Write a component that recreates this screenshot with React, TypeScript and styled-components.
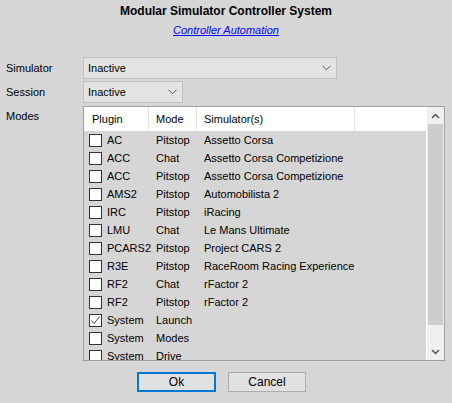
import React from "react";
import styled, { createGlobalStyle } from "styled-components";

const Global = createGlobalStyle`
  html, body { margin: 0; padding: 0; background: #d6d6d6; }
  body { font-family: "Liberation Sans", Arial, sans-serif; font-size: 11px; color: #000; }
`;

const Window = styled.div`
  width: 452px;
  height: 403px;
  box-sizing: border-box;
  padding-top: 4px;
  display: flex;
  flex-direction: column;
  overflow: hidden;
`;

const Title = styled.div`
  text-align: center;
  font-weight: bold;
  font-size: 12px;
  line-height: 14px;
`;

const LinkRow = styled.div`
  text-align: center;
  margin-top: 5px;
  line-height: 14px;
`;

const Link = styled.a`
  color: #0000ff;
  font-style: italic;
  text-decoration: underline;
  cursor: pointer;
`;

const Form = styled.div`
  display: grid;
  grid-template-columns: 77px 1fr;
  row-gap: 2px;
  padding-left: 6px;
  margin-top: 20px;
`;

const Label = styled.div<{ $top?: number }>`
  line-height: 22px;
  padding-top: ${(p) => p.$top ?? 0}px;
`;

const Select = styled.div<{ $width: number }>`
  width: ${(p) => p.$width}px;
  height: 22px;
  box-sizing: border-box;
  border: 1px solid #c2c2c2;
  background: #e4e4e4;
  display: flex;
  align-items: center;
  justify-content: space-between;
  padding: 0 5px 0 4px;
`;

const Chevron = () => (
  <svg width="9" height="6" viewBox="0 0 9 6">
    <path d="M0.5 0.8 L4.5 4.8 L8.5 0.8" fill="none" stroke="#555" strokeWidth="1" />
  </svg>
);

const ListBox = styled.div`
  margin-top: 1px;
  width: 362px;
  height: 255px;
  box-sizing: border-box;
  border: 1px solid #a0a0a0;
  display: flex;
  background: #d6d6d6;
`;

const Table = styled.div`
  flex: 1;
  overflow: hidden;
  display: flex;
  flex-direction: column;
`;

const cols = "65px 48px 158px 1fr";

const HeaderRow = styled.div`
  display: grid;
  grid-template-columns: ${cols};
  height: 24px;
  flex: none;
  background: #ffffff;
`;

const HeaderCell = styled.div<{ $pad: number; $last?: boolean }>`
  padding-left: ${(p) => p.$pad}px;
  line-height: 24px;
  border-right: ${(p) => (p.$last ? "none" : "1px solid #e5e5e5")};
  white-space: nowrap;
`;

const Row = styled.div`
  display: grid;
  grid-template-columns: ${cols};
  height: 18px;
  flex: none;
  align-items: center;
  white-space: nowrap;
`;

const PluginCell = styled.div`
  display: flex;
  align-items: center;
  padding-left: 5px;
  gap: 5px;
`;

const Cell = styled.div`
  padding-left: 7px;
`;

const Box = styled.span`
  width: 13px;
  height: 13px;
  box-sizing: border-box;
  border: 1px solid #333;
  background: #fff;
  display: inline-flex;
  align-items: center;
  justify-content: center;
  flex: none;
`;

const Scrollbar = styled.div`
  width: 17px;
  flex: none;
  border-left: 1px solid #ffffff;
  display: flex;
  flex-direction: column;
  background: #f0f0f0;
`;

const Arrow = styled.div`
  height: 17px;
  flex: none;
  display: flex;
  align-items: center;
  justify-content: center;
  background: #f0f0f0;
`;

const Thumb = styled.div`
  height: 201px;
  flex: none;
  margin: 0 1px;
  background: #cdcdcd;
`;

const Buttons = styled.div`
  display: flex;
  gap: 12px;
  padding-left: 137px;
  margin-top: 11px;
`;

const Button = styled.div<{ $default?: boolean; $width: number }>`
  width: ${(p) => p.$width}px;
  height: 20px;
  box-sizing: border-box;
  border: ${(p) => (p.$default ? "2px solid #0078d7" : "1px solid #adadad")};
  background: #e1e1e1;
  display: flex;
  align-items: center;
  justify-content: center;
  font-size: 12px;
`;

const rows: [string, string, string, boolean][] = [
  ["AC", "Pitstop", "Assetto Corsa", false],
  ["ACC", "Chat", "Assetto Corsa Competizione", false],
  ["ACC", "Pitstop", "Assetto Corsa Competizione", false],
  ["AMS2", "Pitstop", "Automobilista 2", false],
  ["IRC", "Pitstop", "iRacing", false],
  ["LMU", "Chat", "Le Mans Ultimate", false],
  ["PCARS2", "Pitstop", "Project CARS 2", false],
  ["R3E", "Pitstop", "RaceRoom Racing Experience", false],
  ["RF2", "Chat", "rFactor 2", false],
  ["RF2", "Pitstop", "rFactor 2", false],
  ["System", "Launch", "", true],
  ["System", "Modes", "", false],
  ["System", "Drive", "", false],
];

export default function App() {
  return (
    <Window>
      <Global />
      <Title>Modular Simulator Controller System</Title>
      <LinkRow>
        <Link>Controller Automation</Link>
      </LinkRow>
      <Form>
        <Label>Simulator</Label>
        <Select $width={254}>
          <span>Inactive</span>
          <Chevron />
        </Select>
        <Label>Session</Label>
        <Select $width={100}>
          <span>Inactive</span>
          <Chevron />
        </Select>
        <Label>Modes</Label>
        <ListBox>
          <Table>
            <HeaderRow>
              <HeaderCell $pad={8}>Plugin</HeaderCell>
              <HeaderCell $pad={7}>Mode</HeaderCell>
              <HeaderCell $pad={7}>Simulator(s)</HeaderCell>
              <HeaderCell $pad={7} $last />
            </HeaderRow>
            {rows.map(([p, m, s, c], i) => (
              <Row key={i}>
                <PluginCell>
                  <Box>
                    {c && (
                      <svg width="11" height="11" viewBox="0 0 11 11">
                        <path d="M1.5 5.5 L4 8.5 L9.5 1.5" fill="none" stroke="#444" strokeWidth="1" />
                      </svg>
                    )}
                  </Box>
                  <span>{p}</span>
                </PluginCell>
                <Cell>{m}</Cell>
                <Cell>{s}</Cell>
                <Cell />
              </Row>
            ))}
          </Table>
          <Scrollbar>
            <Arrow>
              <svg width="9" height="6" viewBox="0 0 9 6">
                <path d="M1 5 L4.5 1.5 L8 5" fill="none" stroke="#555" strokeWidth="1.5" />
              </svg>
            </Arrow>
            <Thumb />
            <div style={{ flex: 1 }} />
            <Arrow>
              <svg width="9" height="6" viewBox="0 0 9 6">
                <path d="M1 1 L4.5 4.5 L8 1" fill="none" stroke="#555" strokeWidth="1.5" />
              </svg>
            </Arrow>
          </Scrollbar>
        </ListBox>
      </Form>
      <Buttons>
        <Button $default $width={79}>Ok</Button>
        <Button $width={78}>Cancel</Button>
      </Buttons>
    </Window>
  );
}
